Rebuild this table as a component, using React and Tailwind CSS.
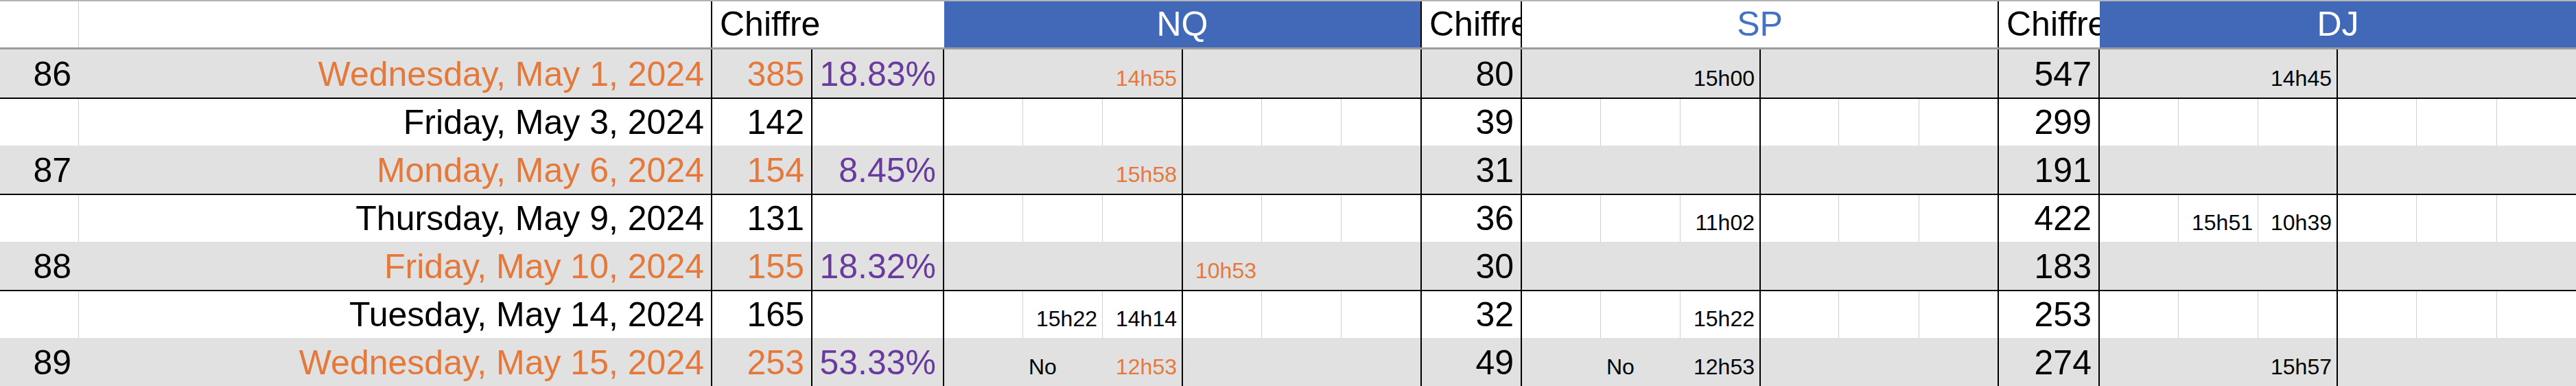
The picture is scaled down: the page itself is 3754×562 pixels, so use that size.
// Feuille de suivi — dates, chiffres et heures NQ / SP / DJ
// Reproduction d'une capture Excel (3754 x 562)

const ORANGE = 'text-[#e4793b]';
const PURPLE = 'text-[#6b3a9e]';

// largeurs + bordure droite de chaque sous-colonne (6 par groupe)
const NQ_COLS = [
  ['w-[115px]', 'thin'], ['w-[116px]', 'thin'], ['w-[117px]', 'thick'],
  ['w-[115px]', 'thin'], ['w-[116px]', 'thin'], ['w-[117px]', 'thick'],
];
const SP_COLS = [
  ['w-[115px]', 'thin'], ['w-[116px]', 'thin'], ['w-[117px]', 'thick'],
  ['w-[114px]', 'thin'], ['w-[117px]', 'thin'], ['w-[116px]', 'thick'],
];
const DJ_COLS = [
  ['w-[115px]', 'thin'], ['w-[116px]', 'thin'], ['w-[116px]', 'thick'],
  ['w-[115px]', 'thin'], ['w-[117px]', 'thin'], ['flex-1', 'none'],
];

const rows = [
  {
    gray: true, n: '86', date: 'Wednesday, May 1, 2024', c: '385', pct: '18.83%',
    nq: { 2: { t: '14h55', o: true } }, e: '80', sp: { 2: { t: '15h00' } }, f: '547', dj: { 2: { t: '14h45' } },
  },
  { gray: false, date: 'Friday, May 3, 2024', c: '142', e: '39', f: '299' },
  {
    gray: true, n: '87', date: 'Monday, May 6, 2024', c: '154', pct: '8.45%',
    nq: { 2: { t: '15h58', o: true } }, e: '31', f: '191',
  },
  {
    gray: false, date: 'Thursday, May 9, 2024', c: '131', e: '36', sp: { 2: { t: '11h02' } }, f: '422',
    dj: { 1: { t: '15h51' }, 2: { t: '10h39' } },
  },
  {
    gray: true, n: '88', date: 'Friday, May 10, 2024', c: '155', pct: '18.32%',
    nq: { 3: { t: '10h53', o: true } }, e: '30', f: '183',
  },
  {
    gray: false, date: 'Tuesday, May 14, 2024', c: '165',
    nq: { 1: { t: '15h22' }, 2: { t: '14h14' } }, e: '32', sp: { 2: { t: '15h22' } }, f: '253',
  },
  {
    gray: true, last: true, n: '89', date: 'Wednesday, May 15, 2024', c: '253', pct: '53.33%',
    nq: { 1: { t: 'No', left: true }, 2: { t: '12h53', o: true } }, e: '49',
    sp: { 1: { t: 'No', left: true }, 2: { t: '12h53' } }, f: '274', dj: { 2: { t: '15h57' } },
  },
];

function lineClass(line, gray) {
  if (line === 'thick') return 'border-r-2 border-r-black';
  if (line === 'thin') return gray ? 'border-r border-r-transparent' : 'border-r border-r-[#d0d0d0]';
  return '';
}

// cellule avec gros texte (50px), aligné en bas comme dans Excel
function BigCell({ w, line, gray, color = 'text-black', left, children }) {
  return (
    <div
      className={`${w} ${lineClass(line, gray)} shrink-0 h-full flex items-end overflow-hidden whitespace-nowrap pb-[9px] text-[50px] leading-none ${color} ${
        left ? 'justify-start pl-[11px]' : 'justify-end pr-[10px]'
      }`}
    >
      {children}
    </div>
  );
}

// sous-colonne d'heure (petit texte)
function TimeCell({ w, line, gray, item }) {
  return (
    <div
      className={`${w} ${lineClass(line, gray)} shrink-0 h-full flex items-end overflow-hidden whitespace-nowrap pb-[12px] text-[32px] leading-none ${
        item?.o ? ORANGE : 'text-black'
      } ${item?.left ? 'justify-start pl-[8px]' : 'justify-end pr-[7px]'}`}
    >
      {item?.t}
    </div>
  );
}

function Group({ cols, data = {}, gray }) {
  return cols.map(([w, line], i) => (
    <TimeCell key={i} w={w} line={line} gray={gray} item={data[i]} />
  ));
}

function HeaderRow() {
  return (
    <div className="flex h-[73px] bg-white border-t-2 border-t-[#b4b4b4] border-b-[3px] border-b-[#9c9c9c]">
      <div className="w-[115px] shrink-0 border-r border-r-[#d0d0d0]" />
      <div className="w-[923px] shrink-0 border-r-2 border-r-black" />
      <BigCell w="w-[338px]" left>Chiffre</BigCell>
      <div className="w-[696px] shrink-0 bg-[#4169b7] border-r-2 border-r-black flex items-end justify-center pb-[9px] text-[50px] leading-none text-white">
        NQ
      </div>
      <BigCell w="w-[146px]" line="thick" left>Chiffre</BigCell>
      <div className="w-[695px] shrink-0 border-r-2 border-r-black flex items-end justify-center pb-[9px] text-[50px] leading-none text-[#4472c4]">
        SP
      </div>
      <BigCell w="w-[147px]" left>Chiffre</BigCell>
      <div className="flex-1 bg-[#4169b7] flex items-end justify-center pb-[9px] text-[50px] leading-none text-white">
        DJ
      </div>
    </div>
  );
}

function DataRow({ r }) {
  const bg = r.gray ? 'bg-[#e1e1e1]' : 'bg-white';
  const h = r.gray ? (r.last ? 'h-[70px]' : 'h-[72px] border-b-2 border-b-black') : 'h-[68px]';
  const hl = r.gray ? ORANGE : 'text-black';
  return (
    <div className={`flex shrink-0 ${bg} ${h}`}>
      <BigCell w="w-[115px]" line="thin" gray={r.gray}>{r.n}</BigCell>
      <BigCell w="w-[923px]" line="thick" gray={r.gray} color={hl}>{r.date}</BigCell>
      <BigCell w="w-[146px]" line="thick" gray={r.gray} color={hl}>{r.c}</BigCell>
      <BigCell w="w-[192px]" line="thick" gray={r.gray} color={PURPLE}>{r.pct}</BigCell>
      <Group cols={NQ_COLS} data={r.nq} gray={r.gray} />
      <BigCell w="w-[146px]" line="thick" gray={r.gray}>{r.e}</BigCell>
      <Group cols={SP_COLS} data={r.sp} gray={r.gray} />
      <BigCell w="w-[147px]" line="thick" gray={r.gray}>{r.f}</BigCell>
      <Group cols={DJ_COLS} data={r.dj} gray={r.gray} />
    </div>
  );
}

export default function App() {
  return (
    <div className="w-[3754px] h-[562px] overflow-hidden bg-white flex flex-col font-['Liberation_Sans',Arial,sans-serif]">
      <HeaderRow />
      {rows.map((r, i) => (
        <DataRow key={i} r={r} />
      ))}
    </div>
  );
}
